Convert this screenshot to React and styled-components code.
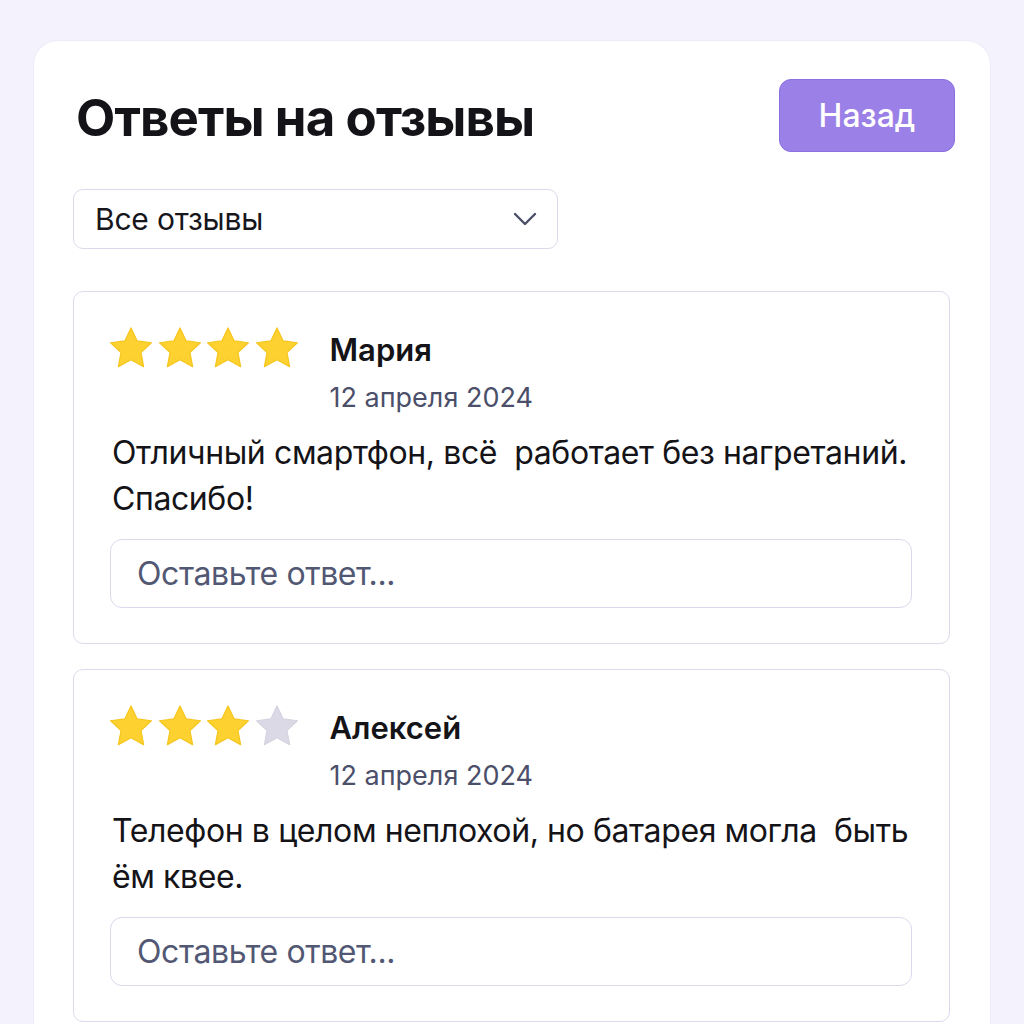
import React from "react";
import styled, { createGlobalStyle } from "styled-components";

const Global = createGlobalStyle`
  html, body { margin: 0; padding: 0; background: #f4f2fc; }
  body { font-family: Inter, "Noto Sans", "Liberation Sans", sans-serif; color: #16161c; }
  * { box-sizing: border-box; }
`;

const Page = styled.div`
  padding: 41px 34px 0 34px;
  height: 1024px;
  overflow: hidden;
`;

const Panel = styled.div`
  background: #ffffff;
  border-radius: 24px 24px 0 0;
  box-shadow: 0 0 0 1px #eeebf8;
  padding: 38px 40px 40px 39px;
  min-height: 1000px;
`;

const Header = styled.div`
  display: flex;
  align-items: center;
  justify-content: space-between;
  margin-right: -5px;
`;

const Title = styled.h1`
  margin: 0;
  font-size: 51px;
  font-weight: 700;
  letter-spacing: -0.9px;
  color: #141418;
  padding-left: 3px;
  padding-top: 4px;
`;

const BackButton = styled.button`
  width: 176px;
  height: 73px;
  border-radius: 12px;
  border: 1px solid #8a6fe0;
  background: #9a80e7;
  color: #ffffff;
  font-family: inherit;
  font-size: 32px;
  font-weight: 500;
  padding-bottom: 2px;
`;

const Select = styled.div`
  margin-top: 37px;
  width: 485px;
  height: 60px;
  border: 1.5px solid #dcd9ec;
  border-radius: 10px;
  display: flex;
  align-items: center;
  justify-content: space-between;
  padding: 0 20px 0 21px;
  font-size: 30px;
  letter-spacing: -0.2px;
  color: #16161c;
`;

const List = styled.div`
  margin-top: 42px;
  display: flex;
  flex-direction: column;
  gap: 25px;
`;

const Review = styled.div`
  border: 1.5px solid #dddaec;
  border-radius: 10px;
  padding: 35px 37px 35px 36px;
`;

const Top = styled.div`
  display: flex;
  align-items: flex-start;
  gap: 32px;
`;

const Stars = styled.div`
  display: flex;
  gap: 6.5px;
`;

const Meta = styled.div`
  display: flex;
  flex-direction: column;
  padding-top: 5px;
`;

const Name = styled.div`
  font-size: 31px;
  font-weight: 600;
  color: #141418;
  line-height: 36px;
`;

const DateText = styled.div`
  margin-top: 14px;
  font-size: 27px;
  color: #4b4f6a;
  line-height: 32px;
`;

const Body = styled.p`
  margin: 16px 0 0 2px;
  font-size: 32px;
  line-height: 46px;
  color: #141418;
  white-space: pre-wrap;
  letter-spacing: -0.4px;
`;

const Reply = styled.div`
  margin-top: 17px;
  height: 69px;
  border: 1.5px solid #dcd9ec;
  border-radius: 12px;
  display: flex;
  align-items: center;
  padding-left: 26px;
  font-size: 32px;
  color: #525873;
  letter-spacing: -0.4px;
`;

const Star = ({ filled }) => (
  <svg width="42" height="41" viewBox="1.6 1.5 20.8 20">
    <path
      d="M12 1.8l3.05 6.45 7.05.9-5.17 4.88 1.32 6.99L12 17.6l-6.25 3.42 1.32-6.99L1.9 9.15l7.05-.9z"
      fill={filled ? "#fdd230" : "#dcd9e6"}
      stroke={filled ? "#f6c51c" : "#d6d3e1"}
      strokeWidth="0.6"
      strokeLinejoin="round"
    />
  </svg>
);

const Chevron = () => (
  <svg width="24" height="14" viewBox="0 0 24 14">
    <path d="M2 2l10 10 10-10" fill="none" stroke="#4b4f66" strokeWidth="2.4" strokeLinecap="round" strokeLinejoin="round" />
  </svg>
);

const reviews = [
  {
    name: "Мария",
    rating: 4,
    date: "12 апреля 2024",
    text: "Отличный смартфон, всё  работает без нагретаний.\nСпасибо!",
  },
  {
    name: "Алексей",
    rating: 3,
    date: "12 апреля 2024",
    text: "Телефон в целом неплохой, но батарея могла  быть\nём квее.",
  },
];

export default function App() {
  return (
    <>
      <Global />
      <Page>
        <Panel>
          <Header>
            <Title>Ответы на отзывы</Title>
            <BackButton>Назад</BackButton>
          </Header>
          <Select>
            <span>Все отзывы</span>
            <Chevron />
          </Select>
          <List>
            {reviews.map((r) => (
              <Review key={r.name}>
                <Top>
                  <Stars>
                    {[0, 1, 2, 3].map((i) => (
                      <Star key={i} filled={i < r.rating} />
                    ))}
                  </Stars>
                  <Meta>
                    <Name>{r.name}</Name>
                    <DateText>{r.date}</DateText>
                  </Meta>
                </Top>
                <Body>{r.text}</Body>
                <Reply>Оставьте ответ...</Reply>
              </Review>
            ))}
          </List>
        </Panel>
      </Page>
    </>
  );
}
